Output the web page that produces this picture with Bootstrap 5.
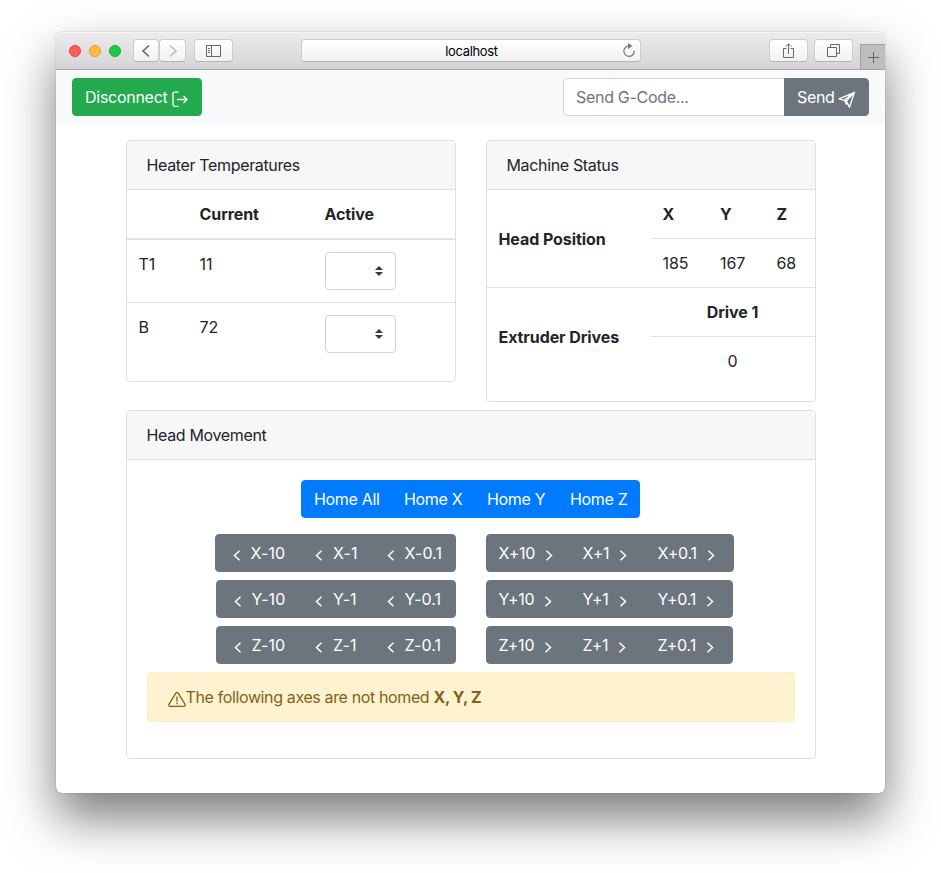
<!DOCTYPE html>
<html lang="en">
<head>
<meta charset="utf-8">
<title>localhost</title>
<link href="https://cdn.jsdelivr.net/npm/bootstrap@5.3.0/dist/css/bootstrap.min.css" rel="stylesheet">
<style>
body{font-family:Inter,"Liberation Sans",sans-serif;font-size:16px;line-height:24px;color:#212529;background:#fff;height:873px;padding:32px 0 0 56px;letter-spacing:-.35px}
.safari{width:829px;height:761px;border-radius:6px;background:#fff;box-shadow:0 0 1px rgba(0,0,0,.55),0 25px 50px rgba(0,0,0,.52)}
.titlebar{height:38px;background:linear-gradient(#edebed,#d5d3d5);border-bottom:1px solid #a6a4a7;border-radius:6px 6px 0 0;box-shadow:inset 0 1px #f6f5f6;padding-left:13px}
.dot{width:12px;height:12px;border-radius:50%;border:1px solid;margin-right:8px}
.dot-r{background:#ff5b57;border-color:#e2443f}.dot-y{background:#ffbd40;border-color:#e0a033}.dot-g{background:#1ccb4c;border-color:#14aa38}
.tool{flex:none;height:23px;background:linear-gradient(#fff,#f2f1f2);border:1px solid #cfcdcf;border-bottom-color:#b5b3b5;border-radius:4px;display:flex;align-items:center;justify-content:center;color:#666}
.tool svg{display:block}
.nav-l{width:26px;margin-left:4px}.nav-r{width:27px;margin-left:0;color:#b8b8b8}
.side-btn{width:39px;margin-left:8px}
.url{width:340px;margin-left:68px;font-size:13px;line-height:20px;letter-spacing:-.33px;color:#000;position:relative;padding:1px 0 0 1px}
.url svg{position:absolute;right:4px;top:3px}
.share{width:39px;margin-left:128px}.tabs{width:39px;margin-left:6px}
.plus-tab{width:25px;height:25px;margin-left:7px;background:#bfbdbf;border:solid #a09ea0;border-width:1px 0 0 1px;color:#666}
.topnav{height:54px;background:#f8f9fb;padding:8px 16px}
.btn{font-size:16px;line-height:24px;padding:6px 12px;border-radius:4px;letter-spacing:-.33px;white-space:nowrap}
.btn-disc{width:130px;background:#23a94e;border-color:#23a94e;color:#fff;text-align:left;letter-spacing:-.27px}
.btn svg{vertical-align:-5px;overflow:visible}
.gcode{width:306px;flex:none}
.gcode .form-control{font-size:16px;line-height:24px;letter-spacing:-.3px;height:38px;border-color:#ced4da;border-radius:4px 0 0 4px}
.gcode .form-control::placeholder{color:#6c757d;opacity:1}
.gcode .btn{width:85px;flex:none;border-radius:0 4px 4px 0;text-align:left}
.gcode .btn svg{margin-left:-1px}
.btn-secondary{background:#6c757e;border-color:#6c757e;color:#fff}
.btn-primary{background:#007aff;border-color:#007aff;color:#fff}
.panels{width:690px;margin:16px auto 0}
.card{border:1px solid #dfdfdf;border-radius:4px}
.card-header{background:#f7f7f7;border-bottom:1px solid #dfdfdf;padding:12px 20px;line-height:24px;height:49px}
.half{width:330px}
.table{table-layout:fixed;margin-bottom:16px;color:#212529}
.table>:not(caption)>*>*{padding:12px;line-height:24px;border:0 solid #dee2e6;background:transparent;box-shadow:none}
.table th{letter-spacing:-.08px}
.table td{letter-spacing:-.05px}
.heat{border-collapse:separate;border-spacing:0}
.heat>thead>tr>th{border-bottom-width:2px!important}
.heat>tbody>tr+tr>td{border-top-width:1px!important}
.pick{display:block;width:71px;height:38px;border:1px solid #ced4da;border-radius:4px;background:#fff}
.pick svg{display:block;margin:13px 0 0 49px}
.status{border-collapse:separate;border-spacing:0}
.status>tbody>tr>.ln{border-top-width:1px!important}
.c1{width:61px}.c2{width:125px}
.s1{width:164px}.s2{width:57.5px}.s3{width:56.5px}
.moves{margin-top:8px}
.moves .card-body{padding:20px 20px 0;height:298px}
.btn-group .btn{flex:none;text-align:left}
.jog{gap:30px}
.jog .lf{width:309px;display:flex;justify-content:flex-end}
.jog .btn{letter-spacing:-.2px}
.jog .lf .btn{letter-spacing:.05px}
.jog .lf svg{margin-right:.5px}.jog .rt svg{margin-left:5px}
.jog .lf .btn:nth-child(1){width:82.5px}.jog .lf .btn:nth-child(2){width:72.500px}.jog .lf .btn:nth-child(3){width:87px}
.jog .rt .btn:nth-child(1){width:85px}.jog .rt .btn:nth-child(2){width:76px}.jog .rt .btn:nth-child(3){width:88px}
.jog.row-x .lf .btn:nth-child(1){width:83.500px}.jog.row-x .rt .btn:nth-child(3){width:89px}
.h1b{width:91px}.h2b{width:84px}.h3b{width:84px}.h4b{width:83px}
.alert{height:50px;padding:12px 20px;border:1px solid #ffedbb;background:#fff2d0;color:#856118;border-radius:4px;letter-spacing:-.37px}
.alert svg{vertical-align:-5px}
</style>
<script src="https://cdn.jsdelivr.net/npm/bootstrap@5.3.0/dist/js/bootstrap.bundle.min.js"></script>
</head>
<body>
<svg width="0" height="0" class="d-none"><defs>
<symbol id="lt" viewBox="0 0 18 18"><path d="M11.5 4.8 6.5 9.5l5 4.7" fill="none" stroke="currentColor" stroke-width="1.5"/></symbol>
<symbol id="gt" viewBox="0 0 18 18"><path d="m6.5 4.8 5 4.7-5 4.7" fill="none" stroke="currentColor" stroke-width="1.5"/></symbol>
<symbol id="ud" viewBox="0 0 8 10"><path d="M4 0 0 4h8zM4 10 0 6h8z" fill="#343a40"/></symbol>
</defs></svg>
<div class="safari">
 <div class="titlebar d-flex align-items-center">
  <span class="dot dot-r"></span><span class="dot dot-y"></span><span class="dot dot-g"></span>
  <span class="tool nav-l"><svg width="10" height="14" fill="none" stroke="currentColor" stroke-width="1.5"><path d="M8 1.5 2 7l6 5.5"/></svg></span>
  <span class="tool nav-r"><svg width="10" height="14" fill="none" stroke="currentColor" stroke-width="1.5"><path d="m2 1.5 6 5.5-6 5.5"/></svg></span>
  <span class="tool side-btn"><svg width="15" height="12" fill="none" stroke="currentColor"><path d="M.5.5h14v11H.5zM5.500.5v11M2 3.500h2M2 5.500h2M2 7.500h2"/></svg></span>
  <span class="tool url">localhost<svg width="15" height="17" fill="none" stroke="#777" stroke-width="1.200"><path d="M8.500 3a5.200 5.200 0 1 0 4.700 4.500"/><path d="m7 0 4.500 3L7 6z" fill="#777" stroke="none"/></svg></span>
  <span class="tool share"><svg width="13" height="16" fill="none" stroke="currentColor"><path d="M4.500 5.500h-3v9h10v-9h-3M6.500 11V1M3.800 3.500l2.700-2.700 2.700 2.700"/></svg></span>
  <span class="tool tabs"><svg width="13" height="13" fill="none" stroke="currentColor"><path d="M.5 3.500h9v9h-9zM3.500 3.500v-3h9v9h-3"/></svg></span>
  <span class="plus-tab d-flex align-self-end align-items-center justify-content-center"><svg width="11" height="11" stroke="currentColor"><path d="M5.500 0v11M0 5.500h11"/></svg></span>
 </div>
 <nav class="topnav d-flex justify-content-between">
  <button class="btn btn-disc">Disconnect <svg width="17" height="18" fill="none" stroke="currentColor" stroke-width="1.300"><path d="M6.500 2.200H2.500Q1 2.200 1 3.700V14.800Q1 16.300 2.500 16.300H6.500M5 9.500h10M11.500 6l3.500 3.500L11.500 13"/></svg></button>
  <div class="input-group gcode"><input class="form-control" placeholder="Send G-Code..."><button class="btn btn-secondary">Send <svg width="18" height="18" fill="none" stroke="currentColor" stroke-width="1.300" stroke-linejoin="round"><path d="m1 8.800 15.500-6.500-5 15-3.200-6.300zM16.500 2.300 8.300 11M16.500 2.300l-10 7.700 2.200 4.800"/></svg></button></div>
 </nav>
 <main class="panels">
  <div class="d-flex justify-content-between align-items-start">
   <section class="card half">
    <div class="card-header">Heater Temperatures</div>
    <table class="table heat">
     <colgroup><col class="c1"><col class="c2"><col></colgroup>
     <thead><tr><th></th><th>Current</th><th>Active</th></tr></thead>
     <tbody>
      <tr><td>T1</td><td>11</td><td><span class="pick" role="listbox"><svg width="8" height="10"><use href="#ud"/></svg></span></td></tr>
      <tr><td>B</td><td>72</td><td><span class="pick" role="listbox"><svg width="8" height="10"><use href="#ud"/></svg></span></td></tr>
     </tbody>
    </table>
   </section>
   <section class="card half">
    <div class="card-header">Machine Status</div>
    <table class="table status">
     <colgroup><col class="s1"><col class="s2"><col class="s3"><col></colgroup>
     <tbody>
      <tr><th rowspan="2" class="align-middle">Head Position</th><th>X</th><th>Y</th><th>Z</th></tr>
      <tr><td class="ln">185</td><td class="ln">167</td><td class="ln">68</td></tr>
      <tr><th rowspan="2" class="align-middle ln">Extruder Drives</th><th colspan="3" class="text-center ln">Drive 1</th></tr>
      <tr><td colspan="3" class="text-center ln">0</td></tr>
     </tbody>
    </table>
   </section>
  </div>
  <section class="card moves">
   <div class="card-header">Head Movement</div>
   <div class="card-body">
    <div class="d-flex justify-content-center mb-3"><div class="btn-group">
     <button class="btn btn-primary h1b">Home All</button><button class="btn btn-primary h2b">Home X</button><button class="btn btn-primary h3b">Home Y</button><button class="btn btn-primary h4b">Home Z</button>
    </div></div>
    <div class="jog row-x d-flex mb-2">
     <div class="lf"><div class="btn-group"><button class="btn btn-secondary"><svg width="18" height="18"><use href="#lt"/></svg>&nbsp;X-10</button><button class="btn btn-secondary"><svg width="18" height="18"><use href="#lt"/></svg>&nbsp;X-1</button><button class="btn btn-secondary"><svg width="18" height="18"><use href="#lt"/></svg>&nbsp;X-0.1</button></div></div>
     <div class="rt"><div class="btn-group"><button class="btn btn-secondary">X+10<svg width="18" height="18"><use href="#gt"/></svg></button><button class="btn btn-secondary">X+1<svg width="18" height="18"><use href="#gt"/></svg></button><button class="btn btn-secondary">X+0.1<svg width="18" height="18"><use href="#gt"/></svg></button></div></div>
    </div>
    <div class="jog d-flex mb-2">
     <div class="lf"><div class="btn-group"><button class="btn btn-secondary"><svg width="18" height="18"><use href="#lt"/></svg>&nbsp;Y-10</button><button class="btn btn-secondary"><svg width="18" height="18"><use href="#lt"/></svg>&nbsp;Y-1</button><button class="btn btn-secondary"><svg width="18" height="18"><use href="#lt"/></svg>&nbsp;Y-0.1</button></div></div>
     <div class="rt"><div class="btn-group"><button class="btn btn-secondary">Y+10<svg width="18" height="18"><use href="#gt"/></svg></button><button class="btn btn-secondary">Y+1<svg width="18" height="18"><use href="#gt"/></svg></button><button class="btn btn-secondary">Y+0.1<svg width="18" height="18"><use href="#gt"/></svg></button></div></div>
    </div>
    <div class="jog d-flex mb-2">
     <div class="lf"><div class="btn-group"><button class="btn btn-secondary"><svg width="18" height="18"><use href="#lt"/></svg>&nbsp;Z-10</button><button class="btn btn-secondary"><svg width="18" height="18"><use href="#lt"/></svg>&nbsp;Z-1</button><button class="btn btn-secondary"><svg width="18" height="18"><use href="#lt"/></svg>&nbsp;Z-0.1</button></div></div>
     <div class="rt"><div class="btn-group"><button class="btn btn-secondary">Z+10<svg width="18" height="18"><use href="#gt"/></svg></button><button class="btn btn-secondary">Z+1<svg width="18" height="18"><use href="#gt"/></svg></button><button class="btn btn-secondary">Z+0.1<svg width="18" height="18"><use href="#gt"/></svg></button></div></div>
    </div>
    <div class="alert mb-0"><svg width="18" height="18" fill="none" stroke="currentColor" stroke-width="1.300" stroke-linejoin="round"><path d="M7.800 3.200.9 14.400Q.5 16.300 2 16.300H16Q17.500 16.300 17.100 14.400L10.200 3.200Q9 1.700 7.800 3.200zM9 6.500v5M9 12.600v1.700"/></svg>The following axes are not homed <strong>X, Y, Z</strong></div>
   </div>
  </section>
 </main>
</div>
</body>
</html>
